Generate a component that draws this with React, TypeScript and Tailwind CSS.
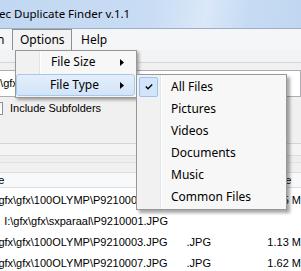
import React from 'react';

const ui = "font-['Noto_Sans',sans-serif]";
const ms = "font-['Liberation_Sans',Arial,sans-serif]";

interface Row {
    path: string;
    ext: string;
    size: string;
}

const rows: Row[] = [
    { path: 'I:\\gfx\\gfx\\100OLYMP\\P9210001.JPG', ext: '.JPG', size: '1.25 M' },
    { path: 'I:\\gfx\\gfx\\sxparaal\\P9210001.JPG', ext: '', size: '' },
    { path: 'I:\\gfx\\gfx\\100OLYMP\\P9210003.JPG', ext: '.JPG', size: '1.13 M' },
    { path: 'I:\\gfx\\gfx\\100OLYMP\\P9210007.JPG', ext: '.JPG', size: '1.62 M' },
];

const fileTypes = ['All Files', 'Pictures', 'Videos', 'Documents', 'Music', 'Common Files'];

const Arrow = () => (
    <svg width="4" height="7" viewBox="0 0 4 7">
        <path d="M0 0L4 3.5L0 7Z" fill="#000" />
    </svg>
);

const Check = () => (
    <svg width="8" height="6" viewBox="0 0 8 6">
        <path d="M0.8 2.6L3 4.8L7.2 0.6" stroke="#000" strokeWidth="1.4" fill="none" />
    </svg>
);

const gutter =
    'bg-[linear-gradient(to_right,#f1f1f1_0,#f1f1f1_23px,#e2e3e3_23px,#e2e3e3_24px,#ffffff_24px,#ffffff_25px,#f7f7f7_25px)]';

export default function App() {
    return (
        <div className="relative w-[301px] h-[271px] overflow-hidden bg-[#f0f0f0]">
            {/* title bar */}
            <div className={`h-[28px] flex items-center bg-[linear-gradient(100deg,#c2d7f1_0%,#c8dcf4_50%,#dae8f9_68%,#c6dbf3_82%,#c1d7f1_100%)] ${ui} text-[11.5px] text-black`}>
                <span className="-ml-[1px] whitespace-nowrap">ec Duplicate Finder v.1.1</span>
            </div>
            <div className="h-[1px] bg-[#9eafc3]" />

            {/* menu bar */}
            <div className={`h-[21px] flex bg-[#f5f6f7] ${ui} text-[12px] text-black`}>
                <span className="w-[15px] flex items-center -ml-[3px]">n</span>
                <span className="w-[60px] flex items-center pl-[7px] border-x border-t border-[#8e8f8f] bg-[#f3f3f3]">Options</span>
                <span className="ml-[9px] flex items-center">Help</span>
            </div>
            <div className="h-[13px] bg-[#f2f3f4] border-b border-[#d6d6d6]" />
            <div className="h-[7px]" />

            {/* path box */}
            <div className={`h-[27px] -ml-[10px] flex items-center pl-[3px] border border-[#abadb3] bg-white ${ms} text-[11px] text-black`}>
                <span className="whitespace-nowrap">I:\gfx\gfx</span>
            </div>

            {/* options area */}
            <div className={`h-[46px] pt-[4px] ${ms} text-[11px] text-black`}>
                <label className="flex items-center h-[14px]">
                    <span className="w-[13px] h-[13px] -ml-[10px] border border-[#8f8f8f] bg-[linear-gradient(#f4f4f4,#ffffff)]" />
                    <span className="ml-[7px] whitespace-nowrap">Include Subfolders</span>
                </label>
            </div>
            <div className="h-[12px] border-t border-[#d5d5d5] bg-[#f4f4f4]" />
            <div className="h-[7px] border-t border-[#dcdcdc] bg-[#eeeeee]" />
            <div className="h-[10px] border-t border-[#e2e2e2] bg-[#f0f0f0]" />

            {/* list header */}
            <div className={`h-[16px] flex items-center border-y border-[#d9dde2] bg-[#f8f9fa] ${ms} text-[11px] text-black`}>
                <span className="-ml-[25px] w-[295px] whitespace-nowrap">Name</span>
                <span className="whitespace-nowrap">Size</span>
            </div>

            {/* list */}
            <div className={`bg-white pt-[2px] h-[90px] ${ms} text-[11px] text-black`}>
                {rows.map((r) => (
                    <div key={r.path} className="h-[21px] flex items-center">
                        <div className="w-[168px] flex justify-end overflow-hidden whitespace-nowrap">
                            <span>{r.path}</span>
                        </div>
                        <span className="ml-[19px] w-[81px] whitespace-nowrap">{r.ext}</span>
                        <span className="whitespace-nowrap">{r.size}</span>
                    </div>
                ))}
            </div>

            {/* Options dropdown */}
            <div className={`absolute left-[15px] top-[50px] w-[122px] flex flex-col gap-[1px] pb-[1px] border border-[#979797] ${gutter} shadow-[2px_2px_3px_rgba(0,0,0,0.35)] ${ui} text-[12px] text-black`}>
                <div className="h-[22px] flex items-center justify-between pl-[34px] pr-[11px] border border-transparent">
                    <span>File Size</span>
                    <Arrow />
                </div>
                <div className="h-[22px] flex items-center justify-between pl-[33px] pr-[10px] mr-[1px] border border-[#a5c9f0] rounded-[3px] bg-[linear-gradient(#e3eefb,#d3e4f8)]">
                    <span>File Type</span>
                    <Arrow />
                </div>
            </div>

            {/* File Type submenu */}
            <div className={`absolute left-[136px] top-[74px] w-[151px] py-[1px] border border-[#979797] ${gutter} shadow-[3px_3px_3px_rgba(0,0,0,0.35)] ${ui} text-[12px] text-black`}>
                {fileTypes.map((t, i) => (
                    <div key={t} className="h-[22px] flex items-center pl-[2px]">
                        {i === 0 ? (
                            <span className="w-[19px] h-[20px] flex items-center justify-center border border-[#99c2ef] rounded-[2px] bg-[#d3e5fa]">
                                <Check />
                            </span>
                        ) : (
                            <span className="w-[19px]" />
                        )}
                        <span className="ml-[13px] whitespace-nowrap">{t}</span>
                    </div>
                ))}
            </div>
        </div>
    );
}
